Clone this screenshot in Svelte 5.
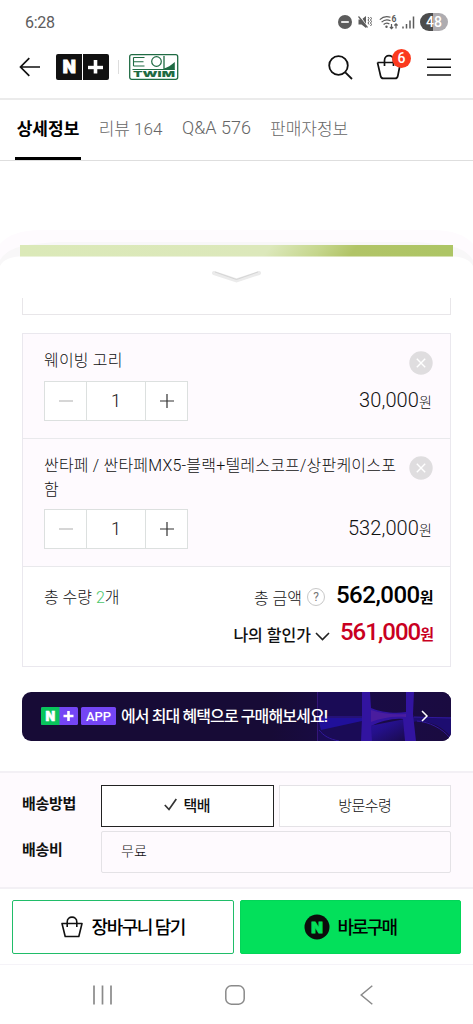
<script>
  let activeTab = $state('detail')
  let delivery = $state('parcel')

  const tabs = [
    { id: 'detail', label: '상세정보' },
    { id: 'review', label: '리뷰 164' },
    { id: 'qna', label: 'Q&A 576' },
    { id: 'seller', label: '판매자정보' }
  ]

  let items = $state([
    { name: '웨이빙 고리', count: 1, price: 30000 },
    { name: '싼타페 / 싼타페MX5-블랙+텔레스코프/상판케이스포함', count: 1, price: 532000 }
  ])

  const discount = 1000
  let totalCount = $derived(items.reduce((sum, item) => sum + item.count, 0))
  let total = $derived(items.reduce((sum, item) => sum + item.price * item.count, 0))

  function format(value) {
    return value.toLocaleString('en-US')
  }

  function change(item, step) {
    item.count = Math.max(1, item.count + step)
  }

  function remove(index) {
    items.splice(index, 1)
  }
</script>

<div class="page">
  <div class="status">
    <span class="status__time">6:28</span>
    <div class="status__icons">
      <svg width="14" height="14" viewBox="0 0 14 14">
        <circle cx="7" cy="7" r="7" fill="#5c5c5c" />
        <path d="M3.2 7h7.6" stroke="#fff" stroke-width="1.7" />
      </svg>
      <svg class="status__mute" width="14" height="14" viewBox="0 0 14 14" fill="none" stroke="#5c5c5c">
        <path d="M.5 4.5h3L8 1v12L3.500 9.500h-3z" fill="#5c5c5c" stroke="none" />
        <path d="M1.500 .5l8 11.500" stroke="#fff" stroke-width="1.200" />
        <path d="M.5 1.500l9 11" stroke-width="1.200" />
        <path d="M10 2l1 1.500-1 1.500 1 1.500-1 1.500 1 1.500M12.500 2l1 1.500-1 1.500 1 1.500-1 1.500 1 1.500-1 1.500" />
      </svg>
      <svg class="status__wifi" width="20" height="15" viewBox="0 0 20 15" fill="none" stroke="#5c5c5c" stroke-width="1.200">
        <path d="M.8 4.600C4 1.500 8 1 11.500 2.300M2.600 7.200C5 4.800 8.500 4.300 11.500 5.700M4.600 9.500c1.800-1.700 4-1.800 5.800-.6" />
        <circle cx="7.500" cy="11.700" r="1.200" fill="#5c5c5c" stroke="none" />
        <path d="M12.500 9v4.500M10.900 12l1.600 1.600L14.100 12M17 13.500V9M15.400 10.500L17 8.900l1.600 1.600" />
        <text x="12.500" y="7" font-size="8.500" font-weight="700" fill="#5c5c5c" stroke="none">6</text>
      </svg>
      <svg class="status__signal" width="13" height="13" viewBox="0 0 13 13" stroke="#5c5c5c" stroke-width="1.500">
        <path d="M1 10.500v2M4.500 8v4.500M8 4.500v8M11.500 .5v12" />
      </svg>
      <span class="battery">48</span>
    </div>
  </div>

  <header class="header">
    <button class="icon-button header__back" aria-label="뒤로">
      <svg width="22" height="20" viewBox="0 0 22 20" fill="none" stroke="#111" stroke-width="1.700">
        <path d="M10.300 1.200L1.500 10l8.800 8.800M1.500 10h19.500" />
      </svg>
    </button>
    <svg class="header__logo" width="53" height="26" viewBox="0 0 53 26">
      <rect width="53" height="26" rx="2" fill="#111" />
      <path d="M26.500 0v26" stroke="#fff" />
      <text class="heavy" x="13.300" y="19" font-size="17" text-anchor="middle" fill="#fff" stroke="#fff" stroke-width=".8">N</text>
      <path d="M32 13.500h15" stroke="#fff" stroke-width="3.400" />
      <path d="M39.500 6v7M39.500 14v5.500" stroke="#fff" stroke-width="3.600" />
    </svg>
    <span class="header__divider"></span>
    <svg class="header__store" width="50" height="26" viewBox="0 0 50 26">
      <rect x=".7" y=".7" width="48" height="24.600" rx="2" fill="#fff" stroke="#1f6b43" stroke-width="1.300" />
      <path d="M4.500 3.500h11M4.500 7.800h10M4.500 12h11M4.500 3.500v8.500" stroke="#1f6b43" stroke-width="1.100" fill="none" />
      <circle cx="27.500" cy="7.500" r="4.800" stroke="#1f6b43" stroke-width="1.200" fill="none" />
      <path d="M35 2v13" stroke="#1f6b43" stroke-width="1.300" />
      <path d="M35 14.500c3.500-1 7-3 10.800-6.500v7.500H35z" fill="#1f6b43" />
      <path d="M3.500 15.500h42.300" stroke="#1f6b43" stroke-width="1.100" />
      <text class="heavy" x="4" y="23.300" font-size="7.500" textLength="42" lengthAdjust="spacingAndGlyphs" fill="#1f6b43">TWIM</text>
    </svg>
    <div class="header__actions">
      <button class="icon-button" aria-label="검색">
        <svg width="25" height="25" viewBox="0 0 25 25" fill="none" stroke="#111" stroke-width="1.800">
          <circle cx="10.500" cy="10.500" r="9.300" />
          <path d="M17.300 17.300l6.700 6.700" />
        </svg>
      </button>
      <button class="icon-button cart" aria-label="장바구니">
        <svg width="26" height="26" viewBox="0 0 26 26" fill="none" stroke="#111" stroke-width="1.700">
          <path d="M1.500 8.500h23L21.800 22c-.3 1.600-1 2.400-2.600 2.400H7.300c-1.600 0-2.400-.8-2.700-2.400L1.500 8.500M8.500 12V6.500c0-6.500 9-6.500 9 0V12" />
        </svg>
        <span class="cart__badge">6</span>
      </button>
      <button class="icon-button" aria-label="메뉴">
        <svg width="24" height="18" viewBox="0 0 24 18" stroke="#111" stroke-width="1.500">
          <path d="M0 1.300h24M0 9.200h24M0 16.900h24" />
        </svg>
      </button>
    </div>
  </header>

  <nav class="tabs">
    {#each tabs as tab}
      <button
        class="tabs__item tabs__item--{tab.id}"
        class:tabs__item--active={activeTab === tab.id}
        onclick={() => (activeTab = tab.id)}
      >
        {tab.label}
      </button>
    {/each}
  </nav>

  <svg class="sheet-top" width="473" height="137" viewBox="0 0 473 137">
    <defs>
      <linearGradient id="product" x1="0" x2="1" y1="0" y2=".02">
        <stop offset="0" stop-color="#dbe9b8" />
        <stop offset=".58" stop-color="#dce8bb" />
        <stop offset=".7" stop-color="#c5d68c" />
        <stop offset=".78" stop-color="#b1c467" />
        <stop offset="1" stop-color="#adc565" />
      </linearGradient>
    </defs>
    <path d="M0 83C8 74 20 69 42 69H431C453 69 465 74 473 83V110H0z" fill="#fefbfe" />
    <path d="M0 99C8 87 20 83 60 81H413C453 83 465 87 473 99V110H0z" fill="#f8f7f8" />
    <path d="M0 105C4 98 11 95.500 22 95.500H451C462 95.500 469 98 473 105V137H0z" fill="#fff" />
    <path d="M20 84h433v11.500H20z" fill="url(#product)" />
    <path d="M214 112l22.500 7.500 22.500-7.500" fill="none" stroke="#ebebeb" stroke-width="4" stroke-linecap="round" />
    <path d="M215 111l21.500 7.500 21.500-7.500" fill="none" stroke="#cfcfcf" stroke-width=".8" />
  </svg>

  <div class="select-tail"></div>

  <section class="order">
    {#each items as item, index}
      <div class="item">
        <div class="item__head">
          <span class="item__name">{item.name}</span>
          <button class="icon-button" aria-label="삭제" onclick={() => remove(index)}>
            <svg width="24" height="24" viewBox="0 0 24 24">
              <circle cx="12" cy="12" r="11.700" fill="#dfdddf" />
              <path d="M7.800 7.800l8.400 8.400M16.200 7.800l-8.400 8.400" stroke="#fff" stroke-width="1.400" />
            </svg>
          </button>
        </div>
        <div class="item__foot">
          <div class="counter">
            <button class="counter__button" aria-label="빼기" onclick={() => change(item, -1)}>
              <svg width="14" height="14" viewBox="0 0 14 14" stroke="#bbb" stroke-width="1.200"><path d="M0 7h14" /></svg>
            </button>
            <span class="counter__value">{item.count}</span>
            <button class="counter__button" aria-label="더하기" onclick={() => change(item, 1)}>
              <svg width="14" height="14" viewBox="0 0 14 14" stroke="#333" stroke-width="1.200"><path d="M0 7h14M7 0v14" /></svg>
            </button>
          </div>
          <span class="item__price">{format(item.price * item.count)}<small>원</small></span>
        </div>
      </div>
    {/each}

    <div class="totals">
      <span class="totals__count">총 수량 <em>{totalCount}</em>개</span>
      <div class="totals__sums">
        <div class="totals__row">
          <span class="totals__label">총 금액</span>
          <span class="help">?</span>
          <strong class="totals__price">{format(total)}<small>원</small></strong>
        </div>
        <div class="totals__row">
          <span class="totals__label totals__label--bold">나의 할인가</span>
          <svg class="totals__arrow" width="15" height="9" viewBox="0 0 15 9" fill="none" stroke="#222" stroke-width="1.600">
            <path d="M1 1l6.500 6.500L14 1" />
          </svg>
          <strong class="totals__price totals__price--red">{format(total - discount)}<small>원</small></strong>
        </div>
      </div>
    </div>
  </section>

  <button class="banner">
    <svg class="banner__art" width="180" height="49" viewBox="0 0 180 49">
      <defs>
        <linearGradient id="glow" x1="0" x2="1">
          <stop offset="0" stop-color="#170b36" />
          <stop offset=".4" stop-color="#190b48" />
          <stop offset="1" stop-color="#1a0b40" />
        </linearGradient>
        <linearGradient id="blue" x1="0" x2="1" y1="0" y2="1">
          <stop offset="0" stop-color="#2c12a0" />
          <stop offset=".4" stop-color="#24108a" />
          <stop offset="1" stop-color="#190a48" />
        </linearGradient>
      </defs>
      <rect width="180" height="49" fill="url(#glow)" />
      <path d="M47 0h45v49H47z" fill="#1a0b56" />
      <path d="M46.500 0v49" stroke="#351678" />
      <path d="M47 26h44v3L50 38z" fill="#20109a" />
      <path d="M98 34l36-7 3 22H97z" fill="url(#blue)" />
      <path d="M142 25h38v20c-10-12-24-17-38-15z" fill="#1d0d70" />
      <path d="M91 0h8l1 16c9 4 24 6 35 4V0h8l-1 22 3 27h-11l-2-22c-10-1-22 2-32 7l1 15H90l1-23z" fill="#3214a0" />
      <path d="M100 18c12 4 24 5 35 4v3c-14-1-25 1-35 5z" fill="#4a1d9e" />
      <path d="M47 25h44M143 25l37 1M146 29c12 1 25 7 33 17" stroke="#31189a" fill="none" />
      <path d="M48 38c5 6 10 9 20 11" stroke="#31189a" fill="none" />
    </svg>
    <span class="banner__content">
      <svg width="37" height="18" viewBox="0 0 37 18">
        <rect width="37" height="18" rx="1.500" fill="#7445f5" />
        <path d="M1.500 0H18.500V18H1.500Q0 18 0 16.500V1.500Q0 0 1.500 0z" fill="#09c45c" />
        <text class="heavy" x="9.200" y="13.500" font-size="12.500" text-anchor="middle" fill="#fff" stroke="#fff" stroke-width=".5">N</text>
        <path d="M22.500 9h10" stroke="#fff" stroke-width="2.400" />
        <path d="M27.500 4v4.500M27.500 9.500v4.500" stroke="#fff" stroke-width="2.600" />
      </svg>
      <span class="banner__app">APP</span>
      <span class="banner__text">에서 최대 혜택으로 구매해보세요!</span>
      <svg class="banner__arrow" width="8" height="12" viewBox="0 0 8 12" fill="none" stroke="#fff" stroke-width="1.500">
        <path d="M1 1l5 5-5 5" />
      </svg>
    </span>
  </button>

  <section class="delivery">
    <span class="delivery__label">배송방법</span>
    <div class="delivery__options">
      <button class="option" class:option--active={delivery === 'parcel'} onclick={() => (delivery = 'parcel')}>
        {#if delivery === 'parcel'}
          <svg width="13" height="13" viewBox="0 0 13 13" fill="none" stroke="#333" stroke-width="1.700">
            <path d="M.8 7l4.200 4.500L12.300 1" />
          </svg>
        {/if}
        택배
      </button>
      <button class="option" class:option--active={delivery === 'visit'} onclick={() => (delivery = 'visit')}>
        방문수령
      </button>
    </div>
    <span class="delivery__label">배송비</span>
    <div class="delivery__fee">무료</div>
  </section>

  <div class="actions">
    <button class="action">
      <svg width="22" height="22" viewBox="0 0 22 22" fill="none" stroke="#111" stroke-width="1.600">
        <path d="M1 7.500h20l-3.200 13H4.200zM6.200 11V6c0-6.500 9.600-6.500 9.600 0v5" stroke-linejoin="round" />
      </svg>
      <span class="action__cart">장바구니 담기</span>
    </button>
    <button class="action action--buy">
      <svg width="26" height="26" viewBox="0 0 26 26">
        <circle cx="13" cy="13" r="12.500" fill="#0c0c0c" />
        <text class="heavy" x="13" y="18.500" font-size="15" text-anchor="middle" fill="#03e05b" stroke="#03e05b" stroke-width=".8">N</text>
      </svg>
      <span class="action__buy">바로구매</span>
    </button>
  </div>

  <div class="navbar">
    <svg width="19" height="20" viewBox="0 0 19 20" stroke="#8a8a8a" stroke-width="1.700">
      <path d="M1 .5v19M9.500 .5v19M18 .5v19" />
    </svg>
    <svg class="navbar__home" width="20" height="20" viewBox="0 0 20 20" fill="none" stroke="#8a8a8a" stroke-width="1.500">
      <rect x=".8" y=".8" width="18.400" height="18.400" rx="5.500" />
    </svg>
    <svg width="13" height="20" viewBox="0 0 13 20" fill="none" stroke="#8a8a8a" stroke-width="1.500">
      <path d="M12.300 .7L1.200 10l11.100 9.300" />
    </svg>
  </div>
</div>

<style>
  :global(body) {
    margin: 0;
    background: #fff;
  }

  .page {
    width: 473px;
    height: 1024px;
    display: flex;
    flex-direction: column;
    overflow: hidden;
    color: #111;
    background-color: #fff;
    font-family: Roboto, 'Noto Sans CJK KR', sans-serif;
    font-weight: 300;
  }

  .page > * {
    flex-shrink: 0;
    box-sizing: border-box;
  }

  button {
    font: inherit;
    color: inherit;
    padding: 0;
    border: none;
    background: none;
    cursor: pointer;
    box-sizing: border-box;
  }

  svg {
    display: block;
    flex-shrink: 0;
  }

  .heavy {
    font-family: Inter, Roboto, sans-serif;
    font-weight: 900;
  }

  .icon-button {
    display: block;
    flex-shrink: 0;
  }

  .status {
    display: flex;
    align-items: center;
    justify-content: space-between;
    height: 44px;
    padding: 0 25px;
  }

  .status__time {
    font-size: 16px;
    font-weight: 400;
    letter-spacing: -0.3px;
    color: #5c5c5c;
  }

  .status__icons {
    display: flex;
    align-items: center;
  }

  .status__mute {
    margin-left: 6px;
  }

  .status__wifi {
    margin-left: 7px;
  }

  .status__signal {
    margin-left: 3px;
  }

  .battery {
    width: 28px;
    height: 18px;
    margin-left: 5px;
    border-radius: 9px;
    font-size: 14px;
    font-weight: 500;
    line-height: 18px;
    text-align: center;
    color: #fff;
    background: linear-gradient(90deg, #4c4c4c 48%, #aeacb0 48%);
  }

  .header {
    display: flex;
    align-items: center;
    height: 56px;
    padding: 0 22px 8px 19px;
    border-bottom: 2px solid #ebebeb;
  }

  .header__logo {
    margin-left: 15px;
  }

  .header__divider {
    width: 1px;
    height: 14px;
    margin: 0 10px 0 9px;
    background-color: #ddd;
  }

  .header__actions {
    display: flex;
    align-items: center;
    gap: 24px;
    margin-left: auto;
  }

  .cart {
    position: relative;
    margin-left: -1px;
    margin-right: 1px;
  }

  .cart__badge {
    position: absolute;
    top: -5px;
    left: 16px;
    width: 19px;
    height: 19px;
    border-radius: 50%;
    font-size: 14px;
    font-weight: 500;
    line-height: 18px;
    text-align: center;
    color: #fff;
    background-color: #fb3a1e;
  }

  .tabs {
    display: flex;
    height: 61px;
    padding-left: 15px;
    border-bottom: 1px solid #dedede;
  }

  .tabs__item {
    height: 60px;
    padding: 0 0 3px;
    border-bottom: 3px solid transparent;
    font-size: 17px;
    white-space: nowrap;
    color: #666;
  }

  .tabs__item--active {
    font-weight: 700;
    color: #000;
    border-bottom-color: #000;
  }

  .tabs__item--detail {
    width: 66px;
    margin-right: 17px;
  }

  .tabs__item--review {
    width: 65px;
    margin-right: 18px;
  }

  .tabs__item--qna {
    width: 71px;
    margin-right: 18px;
    font-size: 18px;
  }

  .sheet-top {
    height: 137px;
  }

  .select-tail {
    height: 17px;
    margin: 0 22px 18px;
    border: 1px solid #e8e6e9;
    border-top: none;
  }

  .order {
    height: 334px;
    margin: 0 22px;
    border: 1px solid #eae8ee;
  }

  .item {
    display: flex;
    flex-direction: column;
    box-sizing: border-box;
    padding: 15px 17px 17px 21px;
    border-bottom: 1px solid #e9e9ec;
    background-color: #fefafe;
  }

  .item__head {
    display: flex;
    align-items: flex-start;
    justify-content: space-between;
    padding-bottom: 3px;
  }

  .item__head .icon-button {
    margin: 2px 0 -3px;
  }

  .item__name {
    width: 356px;
    font-size: 16px;
    line-height: 24px;
    letter-spacing: 0.2px;
    word-break: break-all;
  }

  .item__foot {
    display: flex;
    align-items: center;
    justify-content: space-between;
    margin-top: 4px;
  }

  .item:first-child .item__foot {
    margin-top: 5px;
    margin-bottom: 0;
  }

  .counter {
    display: flex;
    box-sizing: border-box;
    width: 144px;
    height: 40px;
    border: 1px solid #dce0df;
    background-color: #fff;
  }

  .counter__button {
    display: flex;
    align-items: center;
    justify-content: center;
    width: 41px;
  }

  .counter__value {
    flex: 1;
    border: solid #dce0df;
    border-width: 0 1px;
    font-size: 18px;
    line-height: 37px;
    text-align: center;
  }

  .item__price {
    padding-right: 1px;
    font-size: 20px;
    line-height: 38px;
    letter-spacing: 0.1px;
  }

  .item__price small {
    font-size: 14px;
  }

  .totals {
    display: flex;
    justify-content: space-between;
    padding: 11px 17px 0 21px;
  }

  .totals__count {
    font-size: 16px;
    line-height: 39px;
  }

  .totals__count em {
    font-style: normal;
    color: #4cc76c;
  }

  .totals__row {
    display: flex;
    align-items: center;
    justify-content: flex-end;
    height: 37px;
  }

  .totals__label {
    font-size: 16px;
  }

  .totals__label--bold {
    font-weight: 500;
  }

  .help {
    width: 16px;
    height: 16px;
    margin: 0 11px 0 5px;
    border: 1px solid #c8c8c8;
    border-radius: 50%;
    font-size: 12px;
    font-weight: 400;
    line-height: 16px;
    text-align: center;
    color: #777;
  }

  .totals__arrow {
    margin: 5px 10px 0 4px;
  }

  .totals__price {
    font-size: 24px;
    font-weight: 500;
    line-height: 36px;
    letter-spacing: -0.5px;
    color: #000;
  }

  .totals__price small {
    font-size: 15px;
    font-weight: 700;
  }

  .totals__price--red {
    letter-spacing: -1px;
    color: #c9001f;
  }

  .banner {
    display: grid;
    height: 49px;
    margin: 25px 22px 0;
    overflow: hidden;
    border-radius: 9px;
    color: #fff;
    background-color: #170b36;
  }

  .banner > * {
    grid-area: 1 / 1;
  }

  .banner__art {
    justify-self: end;
  }

  .banner__content {
    display: flex;
    align-items: center;
    z-index: 1;
    padding: 0 22px 1px 19px;
  }

  .banner__app {
    width: 35px;
    height: 18px;
    margin: 0 5px 0 3px;
    border-radius: 1.5px;
    font-size: 13px;
    font-weight: 500;
    line-height: 19px;
    text-align: center;
    background-color: #7445f5;
  }

  .banner__text {
    padding-bottom: 3px;
    font-size: 16px;
    font-weight: 500;
    letter-spacing: -0.9px;
    white-space: nowrap;
  }

  .banner__arrow {
    margin-left: auto;
  }

  .delivery {
    display: grid;
    grid-template-columns: 79px 350px;
    grid-template-rows: 42px 42px;
    row-gap: 4px;
    height: 118px;
    margin-top: 30px;
    padding: 12px 22px 0;
    border: solid #f3f0f5;
    border-width: 2px 0;
    background-color: #fefafe;
  }

  .delivery__label {
    font-size: 15px;
    font-weight: 700;
    line-height: 38px;
    letter-spacing: -0.3px;
  }

  .delivery__options {
    display: grid;
    grid-template-columns: 1fr 1fr;
    gap: 5px;
  }

  .option {
    display: flex;
    align-items: center;
    justify-content: center;
    gap: 6px;
    padding-bottom: 4px;
    border: 1px solid #e4e2e6;
    font-size: 15px;
    letter-spacing: -0.5px;
    background-color: #fff;
  }

  .option--active {
    border-color: #222;
    font-weight: 500;
  }

  .delivery__fee {
    padding-left: 19px;
    border: 1px solid #e4e2e6;
    border-radius: 2px;
    font-size: 14px;
    line-height: 39px;
  }

  .actions {
    display: grid;
    grid-template-columns: 1fr 1fr;
    gap: 6px;
    height: 76px;
    padding: 11px 12px 10px;
    border-bottom: 1px solid #f5f3f8;
  }

  .action {
    display: flex;
    align-items: center;
    justify-content: center;
    border: 1px solid #20bd69;
    border-radius: 2px;
    font-size: 18px;
    font-weight: 500;
    white-space: nowrap;
    color: #000;
  }

  .action--buy {
    border-color: #03d558;
    background-color: #03e05b;
  }

  .action__cart {
    margin-left: 9px;
    padding-bottom: 3px;
    letter-spacing: -1.5px;
  }

  .action__buy {
    margin-left: 7px;
    padding-bottom: 3px;
    letter-spacing: -1.9px;
  }

  .navbar {
    display: flex;
    align-items: center;
    justify-content: space-between;
    height: 60px;
    padding: 0 100px 0 93px;
  }

  .navbar__home {
    margin-right: 3px;
  }
</style>
